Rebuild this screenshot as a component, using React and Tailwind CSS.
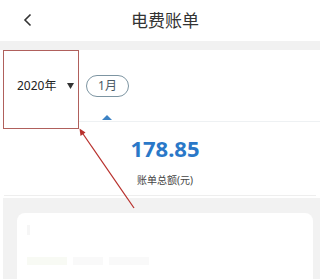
const App = () => {
  return (
    <div
      className="relative w-[320px] h-[279px] overflow-hidden bg-white"
      style={{ fontFamily: '"Noto Sans", "Noto Sans CJK SC", sans-serif' }}
    >
      {/* header */}
      <div className="relative h-[41px] flex items-center justify-center">
        <svg
          className="absolute left-[23px] top-[13px]"
          width="10"
          height="14"
          viewBox="0 0 10 14"
        >
          <path d="M7.5 1.5 L2 7 L7.5 12.5" fill="none" stroke="#333" strokeWidth="1.6" />
        </svg>
        <span className="text-[17px] text-[#333] ml-[10px]">电费账单</span>
      </div>
      <div className="h-[9px] bg-[#f1f1f1]" />

      {/* year / month selector */}
      <div className="flex h-[71px] items-center">
        <div className="flex items-center w-[80px] pl-[17px]">
          <span className="text-[12px] text-[#222]">2020年</span>
          <svg className="ml-[11px]" width="7" height="6" viewBox="0 0 7 6">
            <path d="M0 0 L7 0 L3.5 6 Z" fill="#333" />
          </svg>
        </div>
        <div className="ml-[6px] h-[22px] w-[43px] rounded-full border border-[#7d95a2] flex items-center justify-center text-[12px] text-[#4a5a66]">
          1月
        </div>
      </div>
      <div className="relative h-[1px] ml-[78px] bg-[#eef1f3]">
        <div className="absolute left-[24px] -top-[6px] w-0 h-0 border-l-[5px] border-r-[5px] border-b-[5px] border-l-transparent border-r-transparent border-b-[#3c82c4]" />
      </div>

      {/* total */}
      <div className="flex flex-col items-center pt-[13px]">
        <span className="text-[22px] leading-[26px] font-bold text-[#2a78c8] ml-[10px]">178.85</span>
        <span className="mt-[13px] text-[10px] leading-[13px] text-[#444] ml-[10px]">账单总额(元)</span>
      </div>
      <div className="h-[1px] mt-[8px] mx-[4px] bg-[#eeeeee]" />

      {/* detail card */}
      <div className="mt-[2px] ml-[3px] h-[90px] bg-[#f2f2f2] pt-[15px] pl-[14px] pr-[7px]">
        <div className="h-full rounded-[8px] bg-white pt-[12px] px-[10px]">
          <div className="h-[10px] w-[3px] bg-[#f6f6f6]" />
          <div className="mt-[22px] flex gap-[6px]">
            <div className="h-[8px] w-[40px] bg-[#f8faf4]" />
            <div className="h-[8px] w-[30px] bg-[#f9f9f9]" />
            <div className="h-[8px] w-[40px] bg-[#f9f9f9]" />
          </div>
        </div>
      </div>

      {/* annotation overlay */}
      <div className="absolute left-[3px] top-[50px] w-[76px] h-[79px] border-[1.5px] border-[#b0605c]" />
      <svg className="absolute left-0 top-0" width="320" height="279" viewBox="0 0 320 279">
        <line x1="81" y1="131" x2="134" y2="208" stroke="#b8302c" strokeWidth="1.3" />
        <path d="M79.5 128.5 L80.5 136 L85.5 132.5 Z" fill="#b8302c" />
      </svg>
    </div>
  );
};

export default App;
